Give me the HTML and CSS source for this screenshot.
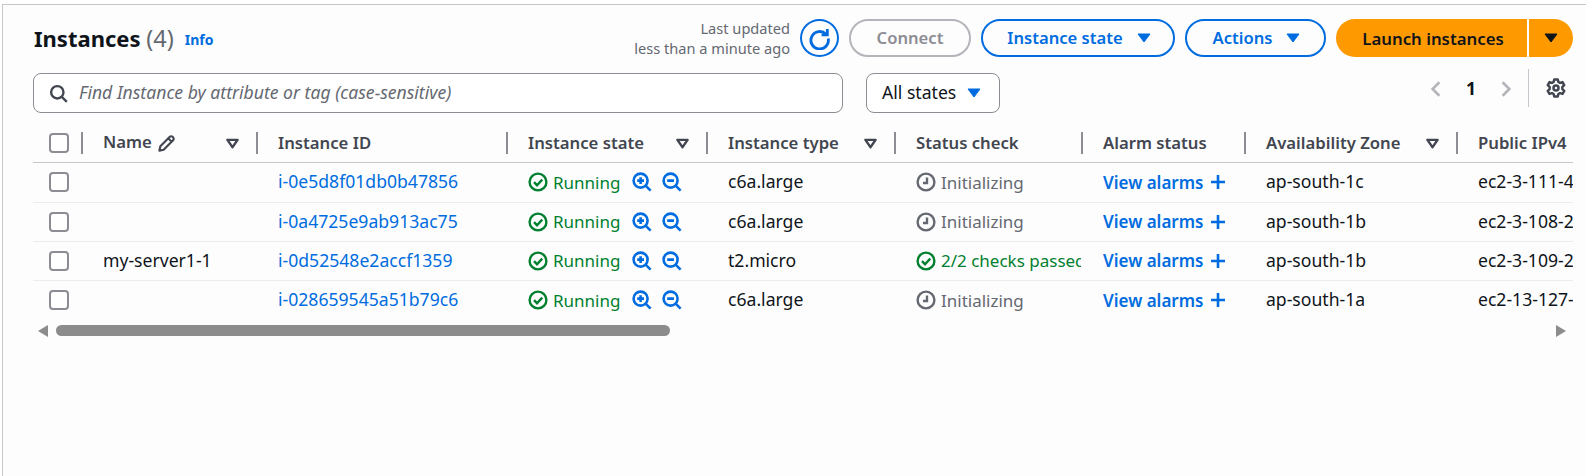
FILE: index.html
```html
<!DOCTYPE html>
<html>
<head>
  <meta charset="utf-8">
  <meta name="viewport" content="width=device-width, initial-scale=1">
  <title>Instances</title>
  <link rel="stylesheet" href="styles.css">
</head>
<body>
  <svg class="icon-defs" width="0" height="0">
    <symbol id="i-sort" viewBox="0 0 16 16"><path d="M2.500 4h11L8 12z" fill="none" stroke="currentColor" stroke-width="2.400" stroke-linejoin="round"/></symbol>
    <symbol id="i-caret" viewBox="0 0 16 16"><path d="M2 4h12L8 12z" fill="currentColor" stroke="currentColor" stroke-linejoin="round"/></symbol>
    <symbol id="i-check" viewBox="0 0 20 20"><circle cx="10" cy="10" r="8.400" fill="none" stroke="currentColor" stroke-width="2.400"/><path d="M6 10.200l3 3 5.200-5.600" fill="none" stroke="currentColor" stroke-width="2.400"/></symbol>
    <symbol id="i-clock" viewBox="0 0 20 20"><circle cx="10" cy="10" r="8.400" fill="none" stroke="currentColor" stroke-width="2.400"/><path d="M11 5.500v5.500H7" fill="none" stroke="currentColor" stroke-width="2.400"/></symbol>
    <symbol id="i-zoom-in" viewBox="0 0 20 20"><circle cx="8.600" cy="8.600" r="7" fill="none" stroke="currentColor" stroke-width="2.600"/><path d="M13.600 13.600l5 5M8.600 5.200v6.800M5.200 8.600h6.800" fill="none" stroke="currentColor" stroke-width="2.600"/></symbol>
    <symbol id="i-zoom-out" viewBox="0 0 20 20"><circle cx="8.600" cy="8.600" r="7" fill="none" stroke="currentColor" stroke-width="2.600"/><path d="M13.600 13.600l5 5M5.200 8.600h6.800" fill="none" stroke="currentColor" stroke-width="2.600"/></symbol>
    <symbol id="i-plus" viewBox="0 0 16 16"><path d="M8 1v14M1 8h14" fill="none" stroke="currentColor" stroke-width="2.600"/></symbol>
  </svg>

  <div class="panel">
    <div class="head-row">
      <h1 class="title">Instances <span class="count">(4)</span></h1>
      <a class="info">Info</a>
      <div class="updated">Last updated<br>less than a minute ago</div>
      <button class="refresh">
        <svg viewBox="0 0 20 20" width="23" height="23"><path d="M15.600 6.200A7.600 7.600 0 1 0 17.600 10" fill="none" stroke="currentColor" stroke-width="2.500"/><path d="M16.800 1.800v5h-5" fill="none" stroke="currentColor" stroke-width="2.500"/></svg>
      </button>
      <button class="btn btn-disabled btn-connect"><span>Connect</span></button>
      <button class="btn btn-state"><span>Instance state</span><svg class="caret" width="16" height="16"><use href="#i-caret"/></svg></button>
      <button class="btn btn-actions"><span>Actions</span><svg class="caret" width="16" height="16"><use href="#i-caret"/></svg></button>
      <div class="launch">
        <button class="launch-main"><span>Launch instances</span></button>
        <button class="launch-more"><svg width="16" height="16"><use href="#i-caret"/></svg></button>
      </div>
    </div>

    <div class="filter-row">
      <div class="search">
        <svg viewBox="0 0 16 16" width="19" height="19"><circle cx="7" cy="7" r="5.200" fill="none" stroke="currentColor" stroke-width="2"/><path d="M11 11l4 4" fill="none" stroke="currentColor" stroke-width="2"/></svg>
        <span>Find Instance by attribute or tag (case-sensitive)</span>
      </div>
      <div class="state-select"><span>All states</span><svg width="16" height="16"><use href="#i-caret"/></svg></div>
      <div class="pager">
        <svg viewBox="0 0 16 16" width="18" height="18"><path d="M11 2L5 8l6 6" fill="none" stroke="currentColor" stroke-width="2.300"/></svg>
        <span class="page-num">1</span>
        <svg viewBox="0 0 16 16" width="18" height="18"><path d="M5 2l6 6-6 6" fill="none" stroke="currentColor" stroke-width="2.300"/></svg>
      </div>
      <div class="prefs">
        <svg viewBox="0 0 16 16" width="20" height="20"><path d="M6.600 1.200h2.800l.5 2 1.300.7 2-.6 1.400 2.400-1.500 1.400v1.800l1.500 1.400-1.400 2.400-2-.6-1.300.7-.5 2H6.600l-.5-2-1.300-.7-2 .6-1.400-2.400 1.500-1.400V7.100l-1.500-1.400 1.400-2.400 2 .6 1.300-.7z" fill="none" stroke="currentColor" stroke-width="2" stroke-linejoin="round"/><circle cx="8" cy="8" r="2" fill="none" stroke="currentColor" stroke-width="2"/></svg>
      </div>
    </div>

    <div class="table-wrap">
      <table class="instances">
        <colgroup>
          <col class="c-check"><col class="c-name"><col class="c-id"><col class="c-state"><col class="c-type"><col class="c-status"><col class="c-alarm"><col class="c-az"><col class="c-dns">
        </colgroup>
        <thead>
          <tr>
            <th><span class="box"></span></th>
            <th><span class="th-in name-head"><span class="name-label">Name</span><svg class="pencil" viewBox="0 0 16 16" width="19" height="19"><path d="M2 14l.8-3.600 8-8a1.600 1.600 0 0 1 2.300 0l.5.5a1.600 1.600 0 0 1 0 2.300l-8 8zM9.600 3.800l2.600 2.600" fill="none" stroke="currentColor" stroke-width="1.800" stroke-linejoin="round"/></svg><svg class="sort" width="15" height="15"><use href="#i-sort"/></svg></span></th>
            <th><span class="th-in">Instance ID</span></th>
            <th><span class="th-in">Instance state<svg class="sort" width="15" height="15"><use href="#i-sort"/></svg></span></th>
            <th><span class="th-in">Instance type<svg class="sort" width="15" height="15"><use href="#i-sort"/></svg></span></th>
            <th><span class="th-in">Status check</span></th>
            <th><span class="th-in">Alarm status</span></th>
            <th><span class="th-in">Availability Zone<svg class="sort" width="15" height="15"><use href="#i-sort"/></svg></span></th>
            <th class="last"><span class="th-in">Public IPv4</span></th>
          </tr>
        </thead>
        <tbody>
          <tr>
            <td><span class="box"></span></td>
            <td></td>
            <td><a class="link">i-0e5d8f01db0b47856</a></td>
            <td><span class="running"><svg width="20" height="20"><use href="#i-check"/></svg>Running</span><span class="zooms"><svg width="20" height="20"><use href="#i-zoom-in"/></svg><svg width="20" height="20"><use href="#i-zoom-out"/></svg></span></td>
            <td>c6a.large</td>
            <td><span class="pending"><svg width="20" height="20"><use href="#i-clock"/></svg>Initializing</span></td>
            <td><a class="alarms">View alarms <svg width="16" height="16"><use href="#i-plus"/></svg></a></td>
            <td>ap-south-1c</td>
            <td>ec2-3-111-43-17</td>
          </tr>
          <tr>
            <td><span class="box"></span></td>
            <td></td>
            <td><a class="link">i-0a4725e9ab913ac75</a></td>
            <td><span class="running"><svg width="20" height="20"><use href="#i-check"/></svg>Running</span><span class="zooms"><svg width="20" height="20"><use href="#i-zoom-in"/></svg><svg width="20" height="20"><use href="#i-zoom-out"/></svg></span></td>
            <td>c6a.large</td>
            <td><span class="pending"><svg width="20" height="20"><use href="#i-clock"/></svg>Initializing</span></td>
            <td><a class="alarms">View alarms <svg width="16" height="16"><use href="#i-plus"/></svg></a></td>
            <td>ap-south-1b</td>
            <td>ec2-3-108-21-90</td>
          </tr>
          <tr>
            <td><span class="box"></span></td>
            <td>my-server1-1</td>
            <td><a class="link">i-0d52548e2accf1359</a></td>
            <td><span class="running"><svg width="20" height="20"><use href="#i-check"/></svg>Running</span><span class="zooms"><svg width="20" height="20"><use href="#i-zoom-in"/></svg><svg width="20" height="20"><use href="#i-zoom-out"/></svg></span></td>
            <td>t2.micro</td>
            <td class="clip"><span class="passed"><svg width="20" height="20"><use href="#i-check"/></svg>2/2 checks passed</span></td>
            <td><a class="alarms">View alarms <svg width="16" height="16"><use href="#i-plus"/></svg></a></td>
            <td>ap-south-1b</td>
            <td>ec2-3-109-25-61</td>
          </tr>
          <tr>
            <td><span class="box"></span></td>
            <td></td>
            <td><a class="link">i-028659545a51b79c6</a></td>
            <td><span class="running"><svg width="20" height="20"><use href="#i-check"/></svg>Running</span><span class="zooms"><svg width="20" height="20"><use href="#i-zoom-in"/></svg><svg width="20" height="20"><use href="#i-zoom-out"/></svg></span></td>
            <td>c6a.large</td>
            <td><span class="pending"><svg width="20" height="20"><use href="#i-clock"/></svg>Initializing</span></td>
            <td><a class="alarms">View alarms <svg width="16" height="16"><use href="#i-plus"/></svg></a></td>
            <td>ap-south-1a</td>
            <td>ec2-13-127-40-8</td>
          </tr>
        </tbody>
      </table>
    </div>

    <div class="scroller">
      <span class="arrow-left"></span>
      <span class="thumb"></span>
      <span class="arrow-right"></span>
    </div>
  </div>
</body>
</html>
```

FILE: styles.css
```css
* {
  margin: 0;
  padding: 0;
  box-sizing: border-box;
}

html, body {
  height: 100%;
  overflow: hidden;
}

body {
  padding: 4px 0 0 2px;
  background-color: #fff;
  color: #0f141a;
  font-family: "Noto Sans", sans-serif;
  font-size: 17.600px;
}

button {
  font-family: inherit;
  cursor: pointer;
}

svg {
  flex: none;
}

.icon-defs {
  position: absolute;
}

.panel {
  height: 100%;
  padding: 14px 13px 0 30px;
  background-color: #fdfdfd;
  border-top: 1px solid #c6c6cd;
  border-left: 1px solid #c6c6cd;
}

.head-row {
  display: flex;
  align-items: center;
  height: 38px;
}

.title {
  margin-left: 1px;
  font-size: 22px;
  font-weight: 700;
  line-height: 38px;
}

.count {
  color: #656871;
  font-size: 23.500px;
  font-weight: 400;
}

.info {
  margin: 3px 0 0 11px;
  color: #006ce0;
  font-size: 14px;
  font-weight: 700;
}

.updated {
  margin-left: auto;
  color: #656871;
  font-size: 14.600px;
  line-height: 20px;
  text-align: right;
}

.refresh {
  display: flex;
  align-items: center;
  justify-content: center;
  width: 39px;
  height: 38px;
  margin: 0 10px;
  background: none;
  border: 2px solid #006ce0;
  border-radius: 50%;
  color: #006ce0;
}

.btn {
  display: flex;
  align-items: center;
  justify-content: center;
  gap: 13px;
  height: 38px;
  margin-right: 10px;
  padding-left: 3px;
  background: none;
  border: 2px solid #006ce0;
  border-radius: 20px;
  color: #006ce0;
  font-size: 16.600px;
  font-weight: 600;
}

.btn span,
.launch-main span {
  margin-top: -2px;
}

.btn-connect {
  width: 122px;
  padding-left: 0;
}

.btn-state {
  width: 194px;
}

.btn-actions {
  width: 141px;
}

.btn-disabled {
  border-color: #b4b4bb;
  color: #8c8c94;
}

.launch {
  display: flex;
  gap: 2px;
}

.launch button {
  height: 38px;
  background-color: #ff9900;
  border: none;
  color: #0f141a;
  font-size: 16.800px;
  font-weight: 600;
}

.launch-main {
  width: 191px;
  padding-left: 3px;
  border-radius: 20px 0 0 20px;
}

.launch-more {
  display: flex;
  align-items: center;
  justify-content: center;
  width: 44px;
  border-radius: 0 20px 20px 0;
}

.filter-row {
  display: flex;
  align-items: flex-start;
  height: 56px;
  margin-top: 12px;
}

.search {
  display: flex;
  align-items: center;
  gap: 11px;
  width: 810px;
  height: 40px;
  margin-top: 4px;
  padding-left: 15px;
  background-color: #fff;
  border: 1px solid #8c8c94;
  border-radius: 8px;
  color: #424650;
}

.search span {
  margin-top: -2px;
  color: #656871;
  font-style: italic;
}

.state-select {
  display: flex;
  align-items: center;
  justify-content: space-between;
  width: 134px;
  height: 40px;
  margin: 4px 0 0 23px;
  padding: 0 17px 0 15px;
  background-color: #fff;
  border: 1px solid #8c8c94;
  border-radius: 8px;
}

.state-select span {
  margin-top: -2px;
}

.state-select svg {
  color: #006ce0;
}

.pager {
  display: flex;
  align-items: center;
  justify-content: space-between;
  width: 88px;
  height: 38px;
  margin-left: auto;
  margin-right: 13px;
  color: #b4b4bb;
}

.pager svg {
  margin-top: 2px;
}

.page-num {
  color: #0f141a;
  font-weight: 700;
}

.prefs {
  display: flex;
  align-items: center;
  justify-content: flex-end;
  width: 45px;
  height: 38px;
  padding-right: 7px;
  border-left: 1px solid #c6c6cd;
  color: #424650;
}

.table-wrap {
  overflow: hidden;
}

.instances {
  width: 1660px;
  border-collapse: collapse;
  table-layout: fixed;
}

.c-check { width: 48px; }
.c-name { width: 175px; }
.c-id { width: 250px; }
.c-state { width: 200px; }
.c-type { width: 188px; }
.c-status { width: 187px; }
.c-alarm { width: 163px; }
.c-az { width: 212px; }

.instances th {
  height: 37px;
  padding: 0;
  border-bottom: 1px solid #c6c6cd;
  color: #424650;
  font-size: 16.700px;
  font-weight: 600;
  text-align: left;
  vertical-align: middle;
}

.instances th:first-child,
.instances td:first-child {
  padding-left: 16px;
}

.th-in {
  display: flex;
  align-items: center;
  height: 22px;
  padding: 0 16px 2px 20px;
  border-left: 2px solid #8c8c94;
}

.th-in .sort {
  margin-top: 2px;
  margin-left: auto;
}

.pencil {
  margin: 2px 0 0 5px;
}

.name-label {
  margin-top: -2px;
}

.instances td {
  height: 39px;
  padding: 0 0 2px 22px;
  border-bottom: 1px solid #ebebf0;
  white-space: nowrap;
  overflow: hidden;
}

.instances td:first-child {
  padding-bottom: 0;
}

.instances tbody tr:first-child td {
  height: 40px;
}

.instances tbody tr:last-child td {
  border-bottom: none;
}

.box {
  display: block;
  width: 20px;
  height: 20px;
  background-color: #fff;
  border: 2px solid #8c8c94;
  border-radius: 4px;
}

.link {
  color: #006ce0;
}

.running,
.pending,
.passed {
  display: inline-flex;
  align-items: center;
  gap: 5px;
  font-size: 17px;
  vertical-align: middle;
}

.running,
.passed {
  color: #00802f;
}

.pending {
  color: #656871;
}

.zooms {
  display: inline-flex;
  gap: 10px;
  margin-left: 12px;
  color: #006ce0;
  vertical-align: middle;
}

.alarms {
  display: inline-flex;
  align-items: center;
  gap: 7px;
  color: #006ce0;
  font-size: 17px;
  font-weight: 600;
  vertical-align: middle;
}

.scroller {
  display: flex;
  align-items: center;
  height: 11px;
  margin-top: 6px;
  padding-left: 5px;
}

.arrow-left {
  width: 0;
  height: 0;
  border-top: 6px solid transparent;
  border-bottom: 6px solid transparent;
  border-right: 10px solid #8c8c8c;
}

.thumb {
  width: 614px;
  height: 11px;
  margin-left: 8px;
  background-color: #8c8c8c;
  border-radius: 6px;
}

.arrow-right {
  width: 0;
  height: 0;
  margin-left: auto;
  margin-right: 7px;
  border-top: 6px solid transparent;
  border-bottom: 6px solid transparent;
  border-left: 10px solid #8c8c8c;
}
```
